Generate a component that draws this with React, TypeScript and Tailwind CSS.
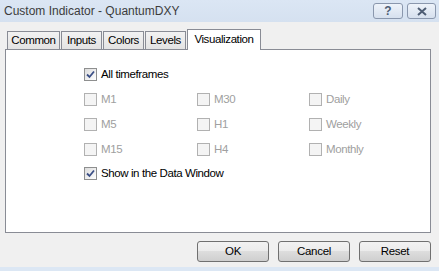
import type { ReactNode } from "react";

const font = { fontFamily: '"Liberation Sans", Arial, sans-serif' };

function CheckBox({ checked, disabled }: { checked?: boolean; disabled?: boolean }) {
  if (disabled) {
    return <span className="block h-[13px] w-[13px] shrink-0 border border-[#b1b1b1] bg-[#f4f4f4]" />;
  }
  return (
    <span className="flex h-[13px] w-[13px] shrink-0 items-center justify-center border border-[#8e8f8f] bg-[linear-gradient(135deg,#dcdcdc,#ffffff)]">
      {checked && (
        <svg width="9" height="9" viewBox="0 0 9 9">
          <path d="M1 4.5 L3.5 7 L8 1.5" fill="none" stroke="#3b4f86" strokeWidth="1.8" />
        </svg>
      )}
    </span>
  );
}

function Option({ label, checked, disabled, width }: { label: string; checked?: boolean; disabled?: boolean; width?: string }) {
  return (
    <div className={`flex items-center gap-[4px] ${width ?? ""}`}>
      <CheckBox checked={checked} disabled={disabled} />
      <span className={`text-[11.5px] leading-none tracking-[-0.4px] ${disabled ? "text-[#a0a0a0]" : "text-black"}`}>{label}</span>
    </div>
  );
}

function Tab({ children, active, width }: { children: ReactNode; active?: boolean; width: string }) {
  if (active) {
    return (
      <div className={`relative z-10 -mb-px flex h-[21px] items-center justify-center border border-b-0 border-[#898c95] bg-white text-[11.5px] tracking-[-0.4px] text-black ${width}`}>
        {children}
      </div>
    );
  }
  return (
    <div className={`flex h-[18px] items-center justify-center border border-b-0 border-[#898c95] bg-[linear-gradient(#f2f2f2,#e3e3e3)] text-[11.5px] tracking-[-0.4px] text-black ${width}`}>
      {children}
    </div>
  );
}

function DlgButton({ children }: { children: ReactNode }) {
  return (
    <div className="flex h-[21px] w-[72px] items-center justify-center rounded-[3px] border border-[#707070] bg-[linear-gradient(#f2f2f2_0%,#ebebeb_50%,#dddddd_50%,#cfcfcf_100%)] text-[11.5px] tracking-[-0.3px] text-black">
      {children}
    </div>
  );
}

export default function App() {
  const rows: [string, string, string][] = [
    ["M1", "M30", "Daily"],
    ["M5", "H1", "Weekly"],
    ["M15", "H4", "Monthly"],
  ];

  return (
    <div style={font} className="flex h-[271px] w-[439px] flex-col overflow-hidden bg-[#f0f0f0]">
      <div className="flex h-[22px] shrink-0 items-start justify-between bg-[linear-gradient(#dbe6f4,#d5e1f0)] pl-[4px] pr-[3px]">
        <span className="mt-[3px] text-[12px] leading-[16px] text-[#3c3c3c]">Custom Indicator - QuantumDXY</span>
        <div className="mt-[3px] flex gap-[4px]">
          <div className="flex h-[16px] w-[30px] items-center justify-center rounded-[3px] border border-[#8a97ad] bg-[linear-gradient(#eef3fa,#d6e0ee)] text-[12px] font-bold leading-none text-[#4e5d74]">
            ?
          </div>
          <div className="flex h-[16px] w-[29px] items-center justify-center rounded-[3px] border border-[#8a97ad] bg-[linear-gradient(#eef3fa,#d6e0ee)]">
            <svg width="12" height="9" viewBox="0 0 12 9">
              <path d="M2 1 L10 8 M10 1 L2 8" stroke="#4e5d74" strokeWidth="2" fill="none" />
            </svg>
          </div>
        </div>
      </div>

      <div className="ml-[7px] mt-[7px] flex items-end gap-[1px]">
        <Tab width="w-[53px]">Common</Tab>
        <Tab width="w-[41px]">Inputs</Tab>
        <Tab width="w-[41px]">Colors</Tab>
        <Tab width="w-[41px]">Levels</Tab>
        <Tab active width="w-[74px]">Visualization</Tab>
      </div>

      <div className="ml-[5px] h-[184px] w-[426px] border border-[#898c95] bg-white pl-[78px] pt-[18px]">
        <Option label="All timeframes" checked />
        <div className="mt-[12px] flex flex-col gap-[12px]">
          {rows.map((r) => (
            <div key={r[0]} className="flex">
              <Option label={r[0]} disabled width="w-[113px]" />
              <Option label={r[1]} disabled width="w-[112px]" />
              <Option label={r[2]} disabled />
            </div>
          ))}
        </div>
        <div className="mt-[11px]">
          <Option label="Show in the Data Window" checked />
        </div>
      </div>

      <div className="mt-[8px] flex justify-end gap-[9px] pr-[8px]">
        <DlgButton>OK</DlgButton>
        <DlgButton>Cancel</DlgButton>
        <DlgButton>Reset</DlgButton>
      </div>
      <div className="mt-auto h-[4px] bg-[#dce7f4]" />
    </div>
  );
}
